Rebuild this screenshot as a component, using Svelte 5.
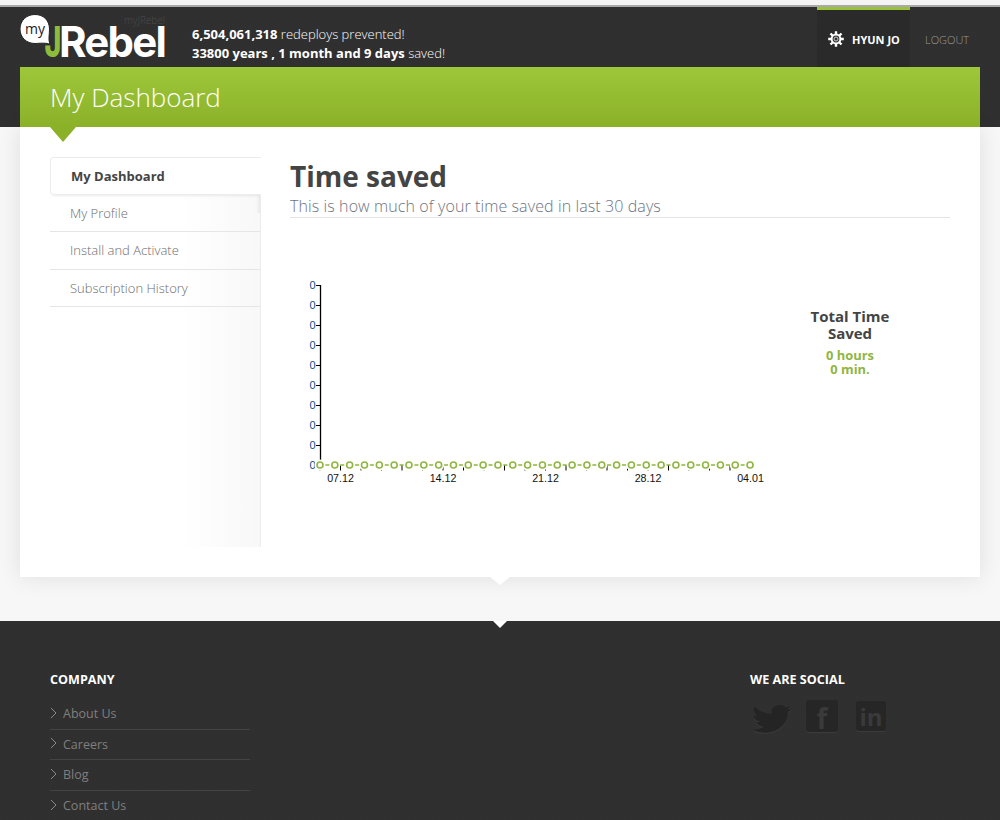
<script lang="ts">
    const menu = ["My Profile", "Install and Activate", "Subscription History"];
    const companyLinks = ["About Us", "Careers", "Blog", "Contact Us"];

    // chart geometry
    const yTicks = Array.from({ length: 10 }, (_, i) => 284 - 270 + i * 20);
    const points = Array.from({ length: 30 }, (_, i) => 30 + i * 14.83);
    const xTicks = Array.from({ length: 21 }, (_, i) => 30 + i * 20.5);
    const dates = [
        { label: "07.12", x: 50.5 },
        { label: "14.12", x: 153 },
        { label: "21.12", x: 255.5 },
        { label: "28.12", x: 358 },
        { label: "04.01", x: 460.5 },
    ];
</script>

<div class="page">
    <div class="top-strip"></div>

    <header class="header">
        <div class="top-row">
            <svg class="logo" width="150" height="53" viewBox="0 0 150 53">
                <text x="104" y="10" class="logo-alt">myJRebel</text>
                <text transform="translate(24.5 43) scale(0.68 1)" class="logo-j">J</text>
                <text x="39" y="43" class="logo-rebel">Rebel</text>
                <path d="M15 0.5 C23.5 0.5 29.5 6.5 29.5 15 C29.5 21 28 26 30 30 C26 29 23 29 15 29.5 C6.5 29.5 0 23.5 0 15 C0 6.5 6.5 0.5 15 0.5 Z" fill="#fff" stroke="#222" stroke-width="1"/>
                <text x="15" y="20" text-anchor="middle" class="logo-my">my</text>
            </svg>
            <div class="stats">
                <div><b>6,504,061,318</b> redeploys prevented!</div>
                <div><b>33800 years , 1 month and 9 days</b> saved!</div>
            </div>
            <nav class="nav">
                <div class="user">
                    <svg width="16" height="16" viewBox="0 0 16 16">
                        <g stroke="#fff" stroke-width="2.4">
                            <path d="M8 0.2V15.8M0.2 8H15.8M2.5 2.5L13.5 13.5M13.5 2.5L2.5 13.5"/>
                        </g>
                        <circle cx="8" cy="8" r="5.4" fill="#fff"/>
                        <circle cx="8" cy="8" r="3.4" fill="#333"/>
                        <circle cx="8" cy="8" r="2" fill="none" stroke="#ccc" stroke-width="1"/>
                    </svg>
                    <span>HYUN JO</span>
                </div>
                <div class="logout">LOGOUT</div>
            </nav>
        </div>
        <div class="title-bar">
            <h2>My Dashboard</h2>
            <span class="title-notch"></span>
        </div>
    </header>

    <section class="card">
        <aside class="sidebar">
            <div class="active-item">My Dashboard</div>
            {#each menu as item}
                <div class="menu-item">{item}</div>
            {/each}
        </aside>

        <main class="main">
            <h1>Time saved</h1>
            <p class="subtitle">This is how much of your time saved in last 30 days</p>

            <div class="chart-row">
                <svg class="chart" width="480" height="220" viewBox="0 0 480 220">
                    <line x1="30.5" y1="14" x2="30.5" y2="190" stroke="#000" stroke-width="1.3"/>
                    {#each yTicks as y}
                        <line x1="26" x2="30" y1={y + 0.5} y2={y + 0.5} stroke="#000"/>
                        <text x="25.5" y={y + 4} class="tick-y" text-anchor="end">0</text>
                    {/each}
                    {#each xTicks as x}
                        <line x1={x} x2={x} y1="194" y2="199.5" stroke="#000"/>
                    {/each}
                    {#each dates as d}
                        <text x={d.x} y="210.5" class="tick-x" text-anchor="middle">{d.label}</text>
                    {/each}
                    <line x1="30" x2="460" y1="194" y2="194" stroke="#8fb63f" stroke-width="1.6"/>
                    {#each points as x}
                        <circle cx={x} cy="194" r="5.5" fill="#fff"/>
                        <circle cx={x} cy="194" r="3" fill="#fff" stroke="#8fb63f" stroke-width="1.6"/>
                    {/each}
                </svg>
                <div class="total">
                    <div class="total-title">Total Time Saved</div>
                    <div class="total-value">0 hours<br />0 min.</div>
                </div>
            </div>
        </main>
        <span class="card-notch"></span>
    </section>

    <footer class="footer">
        <span class="footer-notch"></span>
        <div class="company">
            <h4>COMPANY</h4>
            <ul>
                {#each companyLinks as link}
                    <li>
                        <svg width="7" height="12" viewBox="0 0 7 12">
                            <path d="M1 1L6 6L1 11" fill="none" stroke="#8a8a8a" stroke-width="1"/>
                        </svg>
                        {link}
                    </li>
                {/each}
            </ul>
        </div>
        <div class="social">
            <h4>WE ARE SOCIAL</h4>
            <div class="social-icons">
                <svg class="bird" width="40" height="34" viewBox="0 0 24 24" preserveAspectRatio="none">
                    <path d="M23.953 4.57a10 10 0 01-2.825.775 4.958 4.958 0 002.163-2.723c-.951.555-2.005.959-3.127 1.184a4.92 4.92 0 00-8.384 4.482C7.69 8.095 4.067 6.13 1.64 3.162a4.822 4.822 0 00-.666 2.475c0 1.71.87 3.213 2.188 4.096a4.904 4.904 0 01-2.228-.616v.06a4.923 4.923 0 003.946 4.827 4.996 4.996 0 01-2.212.085 4.936 4.936 0 004.604 3.417 9.867 9.867 0 01-6.102 2.105c-.39 0-.779-.023-1.17-.067a13.995 13.995 0 007.557 2.209c9.053 0 13.998-7.496 13.998-13.985 0-.21 0-.42-.015-.63A9.935 9.935 0 0024 4.59z" fill="#242424"/>
                </svg>
                <div class="square fb">f</div>
                <div class="square in">in</div>
            </div>
        </div>
    </footer>
</div>

<style>
    :global(body) {
        margin: 0;
        background: #f7f7f7;
    }

    .page {
        height: 820px;
        overflow: hidden;
        font-family: "Open Sans", "Liberation Sans", sans-serif;
    }

    .top-strip {
        height: 5px;
        background: #f4f4f4;
        border-bottom: 2px solid #a9a9a9;
    }

    .header,
    .footer {
        background-color: #303030;
        background-image:
            linear-gradient(45deg, rgba(0, 0, 0, 0.05) 25%, transparent 25%, transparent 75%, rgba(0, 0, 0, 0.05) 75%);
        background-size: 3px 3px;
    }

    .header {
        height: 120px;
    }

    .top-row {
        height: 60px;
        display: flex;
        align-items: flex-start;
        padding-left: 20px;
    }

    .logo {
        flex: none;
        margin-top: 7px;
        margin-bottom: -3px;
    }

    .logo-alt {
        font-size: 10px;
        font-weight: 300;
        fill: #4a4a4a;
    }

    .logo-j,
    .logo-rebel {
        font-family: Inter, "Liberation Sans", sans-serif;
        font-size: 42px;
        font-weight: 700;
    }

    .logo-j {
        font-weight: 800;
        fill: #8dbb3c;
    }

    .logo-rebel {
        fill: #fff;
        letter-spacing: -1.8px;
    }

    .logo-my {
        font-size: 14px;
        fill: #222;
    }

    .stats {
        margin-left: 22px;
        margin-top: 18px;
        font-size: 13px;
        line-height: 19px;
        font-weight: 300;
        color: #fff;
        white-space: nowrap;
    }

    .stats b {
        font-weight: 700;
    }

    .nav {
        margin-left: auto;
        display: flex;
        height: 60px;
    }

    .user {
        width: 93px;
        box-sizing: border-box;
        border-top: 3px solid #9ac238;
        background: #2a2a2a;
        display: flex;
        align-items: center;
        gap: 8px;
        padding: 1px 0 0 11px;
        color: #fff;
        font-size: 11px;
        font-weight: 700;
    }

    .logout {
        width: 90px;
        box-sizing: border-box;
        padding: 5px 0 0 15px;
        display: flex;
        align-items: center;
        font-size: 11px;
        font-weight: 300;
        color: #9a9a9a;
    }

    .title-bar {
        position: relative;
        z-index: 2;
        height: 60px;
        margin: 0 20px;
        padding-left: 30px;
        box-sizing: border-box;
        background: linear-gradient(#9fc73a, #8ab128);
    }

    .title-bar h2 {
        margin: 0;
        font-size: 26px;
        line-height: 61px;
        font-weight: 300;
        color: #fff;
    }

    .title-notch {
        position: absolute;
        left: 30px;
        top: 100%;
        border-left: 13px solid transparent;
        border-right: 13px solid transparent;
        border-top: 15px solid #8ab128;
    }

    .card {
        position: relative;
        z-index: 1;
        display: flex;
        height: 450px;
        box-sizing: border-box;
        margin: 0 20px;
        padding: 30px;
        background: #fff;
        box-shadow: 0 0 22px rgba(0, 0, 0, 0.1);
    }

    .sidebar {
        flex: none;
        width: 211px;
        box-sizing: border-box;
        border-right: 1px solid #ececec;
        background: linear-gradient(90deg, #fff 62%, #f8f8f8);
    }

    .active-item {
        position: relative;
        height: 37.5px;
        box-sizing: border-box;
        margin-right: -1px;
        padding-left: 20px;
        background: #fff;
        border: 1px solid #ececec;
        border-right: none;
        border-radius: 4px 0 0 4px;
        box-shadow: 0 3px 3px -2px rgba(0, 0, 0, 0.08);
        font-size: 13px;
        font-weight: 700;
        line-height: 36px;
        color: #444;
    }

    .menu-item {
        height: 37.6px;
        box-sizing: border-box;
        padding-left: 20px;
        border-bottom: 1px solid #e6e6e6;
        font-size: 13px;
        font-weight: 300;
        line-height: 37px;
        color: #6c6c6c;
    }

    .active-item + .menu-item {
        background: linear-gradient(270deg, rgba(0, 0, 0, 0.06), transparent 4px) no-repeat right top / 100% 18px;
    }

    .main {
        flex: 1;
        min-width: 0;
        padding-left: 29px;
    }

    h1 {
        margin: 0;
        font-size: 28px;
        line-height: 38px;
        font-weight: 700;
        color: #444;
    }

    .subtitle {
        margin: 0;
        height: 22px;
        border-bottom: 1px solid #e4e4e4;
        font-size: 16px;
        line-height: 22px;
        font-weight: 300;
        letter-spacing: 0.1px;
        color: #6d7480;
    }

    .chart-row {
        display: flex;
        margin-top: 53px;
    }

    .chart {
        flex: none;
    }

    .tick-y,
    .tick-x {
        font-family: "Liberation Sans", sans-serif;
        font-size: 11px;
        fill: #111;
    }

    .tick-x {
        font-size: 10.7px;
    }

    .tick-y {
        fill: #0b4f8a;
    }

    .total {
        width: 110px;
        margin: 37px 0 0 25px;
        text-align: center;
    }

    .total-title {
        font-size: 15px;
        line-height: 17px;
        font-weight: 700;
        color: #444;
    }

    .total-value {
        margin-top: 6px;
        font-size: 12.9px;
        line-height: 14px;
        font-weight: 700;
        color: #8fb63f;
    }

    .card-notch {
        position: absolute;
        left: 470px;
        top: 100%;
        border-left: 10px solid transparent;
        border-right: 10px solid transparent;
        border-top: 8px solid #fff;
    }

    .footer {
        position: relative;
        display: flex;
        height: 199px;
        margin-top: 44px;
        padding-left: 50px;
        box-sizing: border-box;
    }

    .footer-notch {
        position: absolute;
        left: 493px;
        top: 0;
        border-left: 7px solid transparent;
        border-right: 7px solid transparent;
        border-top: 7px solid #fff;
    }

    h4 {
        margin: 0;
        font-size: 12.6px;
        line-height: 18px;
        font-weight: 700;
        color: #fff;
    }

    .company {
        width: 200px;
        padding-top: 50px;
    }

    .company ul {
        margin: 10px 0 0;
        padding: 0;
        list-style: none;
    }

    .company li {
        display: flex;
        align-items: center;
        gap: 6px;
        height: 30.5px;
        box-sizing: border-box;
        border-bottom: 1px solid #444;
        font-size: 12.5px;
        font-weight: 400;
        color: #7f7f7f;
    }

    .company li svg {
        margin-top: -2px;
    }

    .company li:last-child {
        border-bottom: none;
    }

    .social {
        margin-left: 500px;
        padding-top: 50px;
    }

    .social-icons {
        display: flex;
        align-items: flex-start;
        margin-top: 11px;
    }

    .bird {
        margin: 2px 14px 0 2px;
        filter: drop-shadow(0 1px 0 rgba(255, 255, 255, 0.06));
    }

    .square {
        background: #262626;
        color: #3a3a3a;
        font-weight: 700;
        text-align: center;
        border-radius: 3px;
        box-shadow: 0 1px 0 rgba(255, 255, 255, 0.06);
    }

    .fb {
        width: 32px;
        height: 32px;
        font-size: 28px;
        line-height: 36px;
        margin-right: 18px;
    }

    .in {
        width: 30px;
        height: 30px;
        margin-top: 1px;
        font-size: 24px;
        line-height: 31px;
    }
</style>
